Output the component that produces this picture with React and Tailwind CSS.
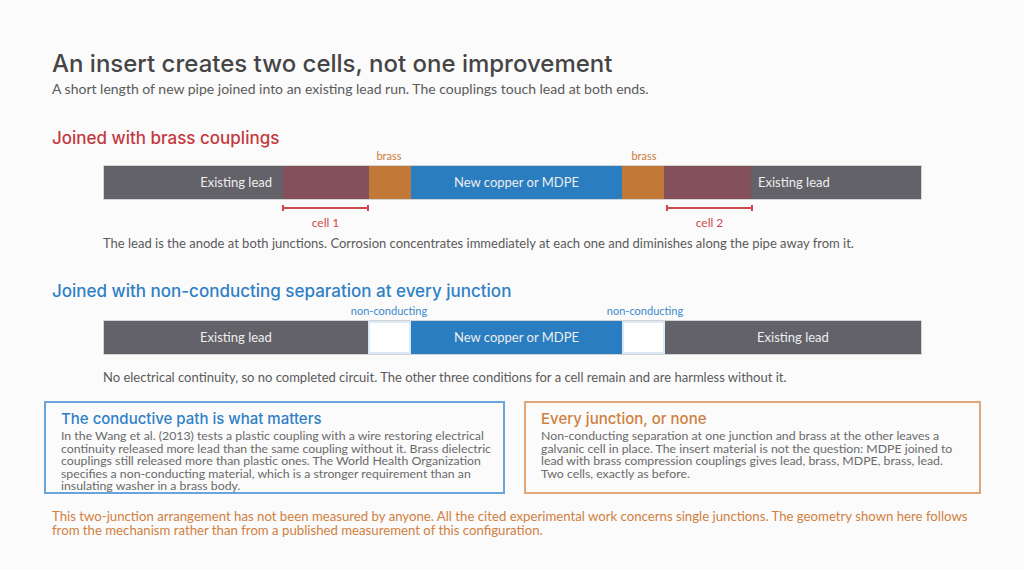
import React from 'react'

const head = "font-['Inter','Noto_Sans',sans-serif]"
const body = "font-['Lato','Liberation_Sans',sans-serif]"

const Bracket = ({ label }) => (
    <div className="flex flex-col items-center">
        <div className="relative w-full h-[6px] mt-[5px]">
            <div className="absolute left-0 right-0 top-[2px] h-[2px] bg-[#cc4a4d]" />
            <div className="absolute left-0 top-0 w-[2px] h-[6px] bg-[#cc4a4d]" />
            <div className="absolute right-0 top-0 w-[2px] h-[6px] bg-[#cc4a4d]" />
        </div>
        <span className="text-[12px] leading-[14px] mt-[5px] text-[#cc4a4d]">{label}</span>
    </div>
)

const App = () => {
    return (
        <div className={`w-full h-[570px] bg-[#fbfbfb] text-[#555] ${body}`}>
            <div className="pl-[52px] pt-[50px]">
                <h1 className={`${head} text-[24px] leading-[28px] font-medium text-[#454545]`}>
                    An insert creates two cells, not one improvement
                </h1>
                <p className="text-[14px] leading-[18px] mt-[2px] text-[#5a5a5a]">
                    A short length of new pipe joined into an existing lead run. The couplings touch lead at both ends.
                </p>

                {/* brass section */}
                <h2 className={`${head} text-[17px] leading-[22px] font-medium text-[#c4393f] mt-[29px]`}>
                    Joined with brass couplings
                </h2>
                <div className="ml-[51px] w-[819px]">
                    <div className="flex h-[16px] items-start text-[11px] leading-[13px] text-[#c97a3d]">
                        <div className="w-[265px]" />
                        <div className="w-[42px] text-center">brass</div>
                        <div className="w-[213px]" />
                        <div className="w-[42px] text-center">brass</div>
                    </div>
                    <div className="flex h-[35px] border border-[#d4d4d4] text-[13px] text-[#eeeeee]">
                        <div className="w-[179px] bg-[#636268] flex items-center justify-end pr-[11px]">Existing lead</div>
                        <div className="w-[86px] bg-[#84515a]" />
                        <div className="w-[42px] bg-[#c27837]" />
                        <div className="flex-1 bg-[#2a7dc0] flex items-center justify-center">New copper or MDPE</div>
                        <div className="w-[42px] bg-[#c27837]" />
                        <div className="w-[87px] bg-[#84515a]" />
                        <div className="w-[170px] bg-[#636268] flex items-center pl-[7px]">Existing lead</div>
                    </div>
                    <div className="flex">
                        <div className="w-[179px]" />
                        <div className="w-[87px]"><Bracket label="cell 1" /></div>
                        <div className="w-[297px]" />
                        <div className="w-[87px]"><Bracket label="cell 2" /></div>
                    </div>
                    <p className="text-[13px] leading-[16px] mt-[5px] text-[#5a5a5a]">
                        The lead is the anode at both junctions. Corrosion concentrates immediately at each one and diminishes along the pipe away from it.
                    </p>
                </div>

                {/* non-conducting section */}
                <h2 className={`${head} text-[17px] leading-[22px] font-medium text-[#2f80c6] mt-[29px]`}>
                    Joined with non-conducting separation at every junction
                </h2>
                <div className="ml-[51px] w-[819px]">
                    <div className="flex h-[18px] items-center text-[11px] text-[#3d88cc]">
                        <div className="w-[224px]" />
                        <div className="w-[124px] text-center">non-conducting</div>
                        <div className="w-[132px]" />
                        <div className="w-[124px] text-center">non-conducting</div>
                    </div>
                    <div className="flex h-[35px] border border-[#d4d4d4] text-[13px] text-[#eeeeee]">
                        <div className="w-[264px] bg-[#636268] flex items-center justify-center">Existing lead</div>
                        <div className="w-[43px] bg-white border-2 border-[#dbe9f6]" />
                        <div className="flex-1 bg-[#2a7dc0] flex items-center justify-center">New copper or MDPE</div>
                        <div className="w-[43px] bg-white border-2 border-[#dbe9f6]" />
                        <div className="w-[256px] bg-[#636268] flex items-center justify-center">Existing lead</div>
                    </div>
                    <p className="text-[13px] leading-[16px] mt-[14px] text-[#5a5a5a]">
                        No electrical continuity, so no completed circuit. The other three conditions for a cell remain and are harmless without it.
                    </p>
                </div>
            </div>

            {/* notes */}
            <div className="flex gap-[19px] pl-[44px] mt-[16px]">
                <div className="w-[461px] h-[93px] border-2 border-[#6aa4dc] pl-[15px] pr-[8px] pt-[6px]">
                    <h3 className={`${head} text-[15px] leading-[20px] font-medium text-[#2f80c6]`}>
                        The conductive path is what matters
                    </h3>
                    <p className="text-[12.3px] leading-[12.6px] mt-[1px] text-[#6a6a6a]">
                        In the Wang et al. (2013) tests a plastic coupling with a wire restoring electrical continuity released more lead than the same coupling without it. Brass dielectric couplings still released more than plastic ones. The World Health Organization specifies a non-conducting material, which is a stronger requirement than an insulating washer in a brass body.
                    </p>
                </div>
                <div className="w-[457px] h-[93px] border-2 border-[#e2a779] pl-[15px] pr-[24px] pt-[6px]">
                    <h3 className={`${head} text-[15px] leading-[20px] font-medium text-[#cf7f40]`}>
                        Every junction, or none
                    </h3>
                    <p className="text-[12.3px] leading-[12.6px] mt-[1px] text-[#6a6a6a]">
                        Non-conducting separation at one junction and brass at the other leaves a galvanic cell in place. The insert material is not the question: MDPE joined to lead with brass compression couplings gives lead, brass, MDPE, brass, lead. Two cells, exactly as before.
                    </p>
                </div>
            </div>

            <p className="pl-[52px] pr-[52px] mt-[15px] text-[13.2px] leading-[14px] text-[#d0803f]">
                This two-junction arrangement has not been measured by anyone. All the cited experimental work concerns single junctions. The geometry shown here follows from the mechanism rather than from a published measurement of this configuration.
            </p>
        </div>
    )
}

export default App
